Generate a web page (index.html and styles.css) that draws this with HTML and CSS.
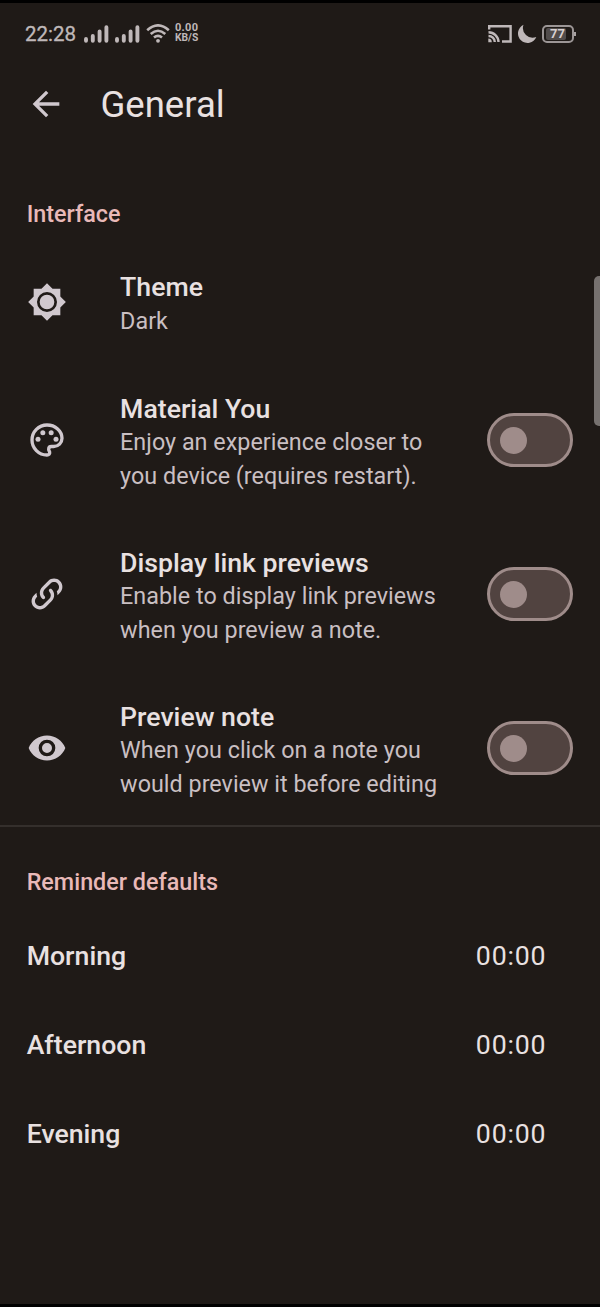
FILE: index.html
```html
<!DOCTYPE html>
<html lang="en">
<head>
<meta charset="utf-8">
<title>General</title>
<link rel="stylesheet" href="styles.css">
</head>
<body>
<div class="screen">
  <header class="status">
    <span class="clock">22:28</span>
    <svg class="signal" viewBox="0 0 25 18"><path d="M2 14v1.800M8.800 11v4.800M15.600 6.500v9.300M22.400 2.200v13.600"/></svg>
    <svg class="signal second" viewBox="0 0 25 18"><path d="M2 14v1.800M8.800 11v4.800M15.600 6.500v9.300M22.400 2.200v13.600"/></svg>
    <svg class="wifi" viewBox="0 0 24 19"><path d="M1.200 6.200Q12-3.500 22.800 6.200M4.700 10Q12 3.500 19.300 10M8 13.600Q12 10.200 16 13.600"/><circle cx="12" cy="16.800" r="1.900"/></svg>
    <span class="speed"><span class="rate">0.00</span><span>KB/S</span></span>
    <span class="status-end">
      <svg class="cast" viewBox="0 0 24 18"><path d="M1.200 4.500V1.200H22.600V16.500H14M.5 7.200A10 10 0 0 1 10.500 17M.5 11A6.300 6.300 0 0 1 6.800 17"/><path class="solid" d="M.3 13.600A3.600 3.600 0 0 1 3.800 17.200H.3z"/></svg>
      <svg class="moon" viewBox="0 0 20 20"><path d="M6.500.8A9.500 9.500 0 1 0 19.300 13A9.700 9.700 0 0 1 6.500.8z"/></svg>
      <span class="battery"><span class="level">77</span></span>
    </span>
  </header>

  <div class="appbar">
    <svg class="icon" viewBox="0 0 24 24"><path d="M20 11H7.830l5.590-5.590L12 4l-8 8 8 8 1.410-1.410L7.830 13H20v-2z"/></svg>
    <h1>General</h1>
  </div>

  <section class="interface">
    <h2>Interface</h2>
    <div class="row short">
      <svg class="icon" viewBox="0 0 24 24"><path d="M20 8.690V4h-4.690L12 .69 8.690 4H4v4.690L.69 12 4 15.310V20h4.690L12 23.310 15.310 20H20v-4.690L23.310 12zM12 18a6 6 0 1 1 0-12 6 6 0 0 1 0 12zM12 7.600a4.400 4.400 0 1 0 0 8.800 4.400 4.400 0 0 0 0-8.800z"/></svg>
      <div class="text"><h3>Theme</h3><p>Dark</p></div>
    </div>
    <div class="row">
      <svg class="icon" viewBox="0 0 24 24"><path class="line" d="M12 3C7 3 3 7 3 12s4 9 9 9c1.200 0 1.800-.8 1.600-1.700-.2-.7-.6-1.100-.6-1.800 0-1 .8-1.600 1.700-1.600H16c2.800 0 5-2.200 5-4.900C21 6.600 17 3 12 3z"/><circle cx="6.600" cy="11.500" r="1.500"/><circle cx="9.500" cy="7.600" r="1.500"/><circle cx="14.500" cy="7.600" r="1.500"/><circle cx="17.400" cy="11.500" r="1.500"/></svg>
      <div class="text"><h3>Material You</h3><p>Enjoy an experience closer to<br>you device (requires restart).</p></div>
      <span class="toggle"><span class="knob"></span></span>
    </div>
    <div class="row">
      <svg class="icon" viewBox="0 0 24 24"><path d="M10.590 13.410C11 13.800 11 14.440 10.590 14.830C10.200 15.220 9.560 15.220 9.170 14.830C7.220 12.880 7.220 9.710 9.170 7.760L12.710 4.220C14.660 2.270 17.830 2.270 19.780 4.220C21.730 6.170 21.730 9.340 19.780 11.290L18.290 12.780C18.300 11.960 18.170 11.140 17.890 10.360L18.360 9.880C19.540 8.710 19.540 6.810 18.360 5.640C17.190 4.460 15.290 4.460 14.120 5.640L10.590 9.170C9.410 10.340 9.410 12.240 10.590 13.410M13.410 9.170C13.800 8.780 14.440 8.780 14.830 9.170C16.780 11.120 16.780 14.290 14.830 16.240L11.290 19.780C9.340 21.730 6.170 21.730 4.220 19.780C2.270 17.830 2.270 14.660 4.220 12.710L5.710 11.220C5.700 12.040 5.830 12.860 6.110 13.650L5.640 14.120C4.460 15.290 4.460 17.190 5.640 18.360C6.810 19.540 8.710 19.540 9.880 18.360L13.410 14.830C14.590 13.660 14.590 11.760 13.410 10.590C13 10.200 13 9.560 13.410 9.170Z"/></svg>
      <div class="text"><h3>Display link previews</h3><p>Enable to display link previews<br>when you preview a note.</p></div>
      <span class="toggle"><span class="knob"></span></span>
    </div>
    <div class="row">
      <svg class="icon" viewBox="0 0 24 24"><path d="M12 9a3 3 0 1 0 0 6 3 3 0 0 0 0-6M12 17a5 5 0 1 1 0-10 5 5 0 0 1 0 10M12 4.500C7 4.500 2.730 7.610 1 12c1.730 4.390 6 7.500 11 7.500s9.270-3.110 11-7.500C21.270 7.610 17 4.500 12 4.500z"/></svg>
      <div class="text"><h3>Preview note</h3><p>When you click on a note you<br>would preview it before editing</p></div>
      <span class="toggle"><span class="knob"></span></span>
    </div>
  </section>

  <section class="reminders">
    <h2>Reminder defaults</h2>
    <div class="time-row"><h3>Morning</h3><span class="time">00:00</span></div>
    <div class="time-row"><h3>Afternoon</h3><span class="time">00:00</span></div>
    <div class="time-row"><h3>Evening</h3><span class="time">00:00</span></div>
  </section>
  <div class="scrollbar"></div>
</div>
</body>
</html>
```
FILE: styles.css
```css
* { box-sizing: border-box; }
body { margin: 0; background: #000; font-family: Roboto, sans-serif; }
h1, h2, h3, p { margin: 0; }
svg { display: block; flex: none; }

.screen {
  position: relative;
  width: 600px;
  height: 1307px;
  background: #1f1a17;
  border-top: 3px solid #000;
  border-bottom: 3px solid #000;
  overflow: hidden;
  color: #e9e1e1;
}

.status {
  display: flex;
  align-items: center;
  height: 61px;
  padding: 0 25px;
  color: #bfb8b9;
}
.clock { width: 59px; font-size: 20.500px; -webkit-text-stroke: 0.300px #bfb8b9; }
.signal { width: 25px; height: 18px; fill: none; stroke: #bfb8b9; stroke-width: 3.900; stroke-linecap: round; }
.second { margin-left: 6px; }
.wifi { width: 24px; height: 19px; margin-left: 6px; fill: #bfb8b9; }
.wifi path { fill: none; stroke: #bfb8b9; stroke-width: 2.600; }
.speed {
  display: flex;
  flex-direction: column;
  margin-left: 5px;
  margin-top: -1px;
  font-size: 10.300px;
  font-weight: 700;
  line-height: 10px;
}
.speed .rate { font-size: 11px; letter-spacing: 0.300px; }
.status-end { display: flex; align-items: center; margin-left: auto; }
.cast { width: 24px; height: 18px; fill: none; stroke: #bfb8b9; stroke-width: 2.400; }
.cast .solid { fill: #bfb8b9; stroke: none; }
.moon { width: 20px; height: 20px; margin-left: 5px; fill: #bfb8b9; }
.battery {
  position: relative;
  width: 32px;
  height: 18px;
  margin: 0 1px 0 5px;
  padding: 1px 2px;
  border: 2px solid #9c9696;
  border-radius: 5px;
}
.battery::after {
  content: "";
  position: absolute;
  right: -4px;
  top: 5px;
  width: 2px;
  height: 4px;
  background: #a8a2a2;
}
.level {
  display: block;
  width: 20px;
  height: 12px;
  padding-left: 4px;
  border-radius: 2px;
  background: #514c4b;
  color: #d7d0d1;
  font-size: 13px;
  font-weight: 700;
  line-height: 12px;
}

.icon { width: 40px; height: 40px; fill: #d0c8ce; }
.icon .line { fill: none; stroke: #d0c8ce; stroke-width: 2; }

.appbar { display: flex; align-items: center; height: 79px; padding: 0 26px; }
.appbar h1 { margin-left: 34.500px; font-size: 36.500px; font-weight: 400; line-height: 44px; padding-top: 3px; }

h2 { padding-left: 26.700px; color: #e9b9b8; font-size: 23.330px; font-weight: 500; line-height: 34px; }
h3 { font-size: 26.670px; font-weight: 500; line-height: 33.400px; }
p { color: #c9bfc2; font-size: 23.330px; line-height: 33.400px; letter-spacing: 0.020px; white-space: nowrap; }

.interface { padding-top: 54px; border-bottom: 2px solid #342f2c; }
.row { display: flex; align-items: center; height: 154px; padding: 0 27px 0 26.600px; }
.short { height: 121.500px; margin-top: 10.500px; }
.text { align-self: flex-start; flex: 1; margin-left: 53.500px; padding-top: 29.800px; }
.toggle {
  display: flex;
  align-items: center;
  width: 86.500px;
  height: 53.500px;
  padding-left: 10px;
  border: 3.300px solid #9f8c8a;
  border-radius: 27px;
  background: #514340;
}
.knob { width: 27px; height: 27px; border-radius: 50%; background: #9f8c8a; }

.reminders { padding-top: 38px; }
.reminders h2 { margin-bottom: 13px; }
.time-row {
  display: flex;
  align-items: center;
  justify-content: space-between;
  height: 89.200px;
  padding: 0 54.500px 0 26.700px;
}
.time { margin-top: -1.500px; font-size: 26.700px; letter-spacing: 0.800px; margin-right: -0.800px; }

.scrollbar {
  position: absolute;
  right: -5px;
  top: 273px;
  width: 11px;
  height: 150px;
  border-radius: 5px;
  background: #76716f;
}
```
